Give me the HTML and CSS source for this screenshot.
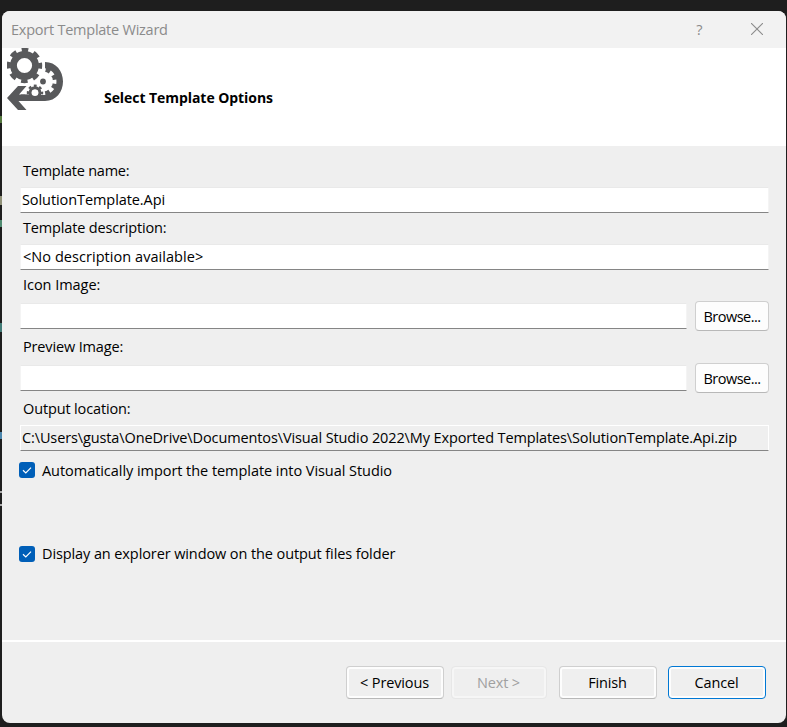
FILE: index.html
```html
<!DOCTYPE html>
<html lang="en">
<head>
<meta charset="utf-8">
<title>Export Template Wizard</title>
<link rel="stylesheet" href="styles.css">
</head>
<body>
<main class="dialog">
  <header class="titlebar">
    <span class="title">Export Template Wizard</span>
    <span class="help">?</span>
    <svg class="close" viewBox="0 0 12 12"><path d="M0 0L12 12M12 0L0 12"/></svg>
  </header>
  <section class="banner">
    <svg class="logo" viewBox="0 0 57 62">
      <defs><mask id="cut"><rect width="57" height="62" fill="#fff"/>
        <g fill="#000" stroke="#000"><circle cx="36" cy="33.500" r="10" stroke="none"/><circle cx="36" cy="33.500" r="11.200" fill="none" stroke-width="4.500" stroke-dasharray="4.400 4.396" stroke-dashoffset="2.200"/><path stroke="none" d="M18 32h18v14.500H18z"/></g></mask></defs>
      <path mask="url(#cut)" d="M38 14C49 14 56 23 56 33.500S49 53 38 53H14V46.500H30L38 38z"/>
      <path d="M19.500 38H11L0 50l11 12h8.500l-8-9H24v-6.500H12z"/>
      <circle cx="17.500" cy="17.500" r="11" class="ring" stroke-width="6.800"/>
      <circle cx="17.500" cy="17.500" r="15.700" class="ring" stroke-width="4" stroke-dasharray="6.600 5.731" stroke-dashoffset="3.300"/>
      <circle cx="36" cy="33.500" r="2.900"/>
      <circle cx="28" cy="44.800" r="4.900" class="ring" stroke-width="3.200"/>
      <circle cx="28" cy="44.800" r="7" class="ring" stroke-width="2.400" stroke-dasharray="2.800 2.698" stroke-dashoffset="1.400"/>
      <path d="M23 48.500h10V53H23z"/>
      <circle cx="28" cy="44.800" r="3.300" class="hole"/>
    </svg>
    <h1>Select Template Options</h1>
  </section>
  <section class="form">
    <label><span class="t1">Template name:</span></label>
    <div class="input"><span class="t2">SolutionTemplate.Api</span></div>
    <label><span class="t3">Template description:</span></label>
    <div class="input"><span class="t4">&lt;No description available&gt;</span></div>
    <label><span class="t5">Icon Image:</span></label>
    <div class="row"><div class="input"></div><button class="browse">Browse...</button></div>
    <label><span class="t6">Preview Image:</span></label>
    <div class="row"><div class="input"></div><button class="browse">Browse...</button></div>
    <label><span class="t7">Output location:</span></label>
    <div class="input readonly"><span class="t8">C:\Users\gusta\OneDrive\Documentos\Visual Studio 2022\My Exported Templates\SolutionTemplate.Api.zip</span></div>
    <div class="check"><svg viewBox="0 0 16 16"><rect width="16" height="16" rx="3"/><path d="M4 8.300L6.800 11 12 5.700"/></svg><span class="t9">Automatically import the template into Visual Studio</span></div>
    <div class="check second"><svg viewBox="0 0 16 16"><rect width="16" height="16" rx="3"/><path d="M4 8.300L6.800 11 12 5.700"/></svg><span class="t10">Display an explorer window on the output files folder</span></div>
  </section>
  <footer class="actions">
    <button>&lt; Previous</button>
    <button class="next" disabled>Next &gt;</button>
    <button class="finish">Finish</button>
    <button class="cancel">Cancel</button>
  </footer>
</main>
</body>
</html>
```
FILE: styles.css
```css
* { box-sizing: border-box; }
body {
  margin: 0; height: 727px; overflow: hidden; padding: 11px 1px 4px 2px;
  font: 14.5px/20px "Open Sans", "Noto Sans", sans-serif; color: #000;
  background:
    linear-gradient(#55783f, #55783f) 0 116px / 2px 7px no-repeat,
    linear-gradient(#8f9077, #8f9077) 0 196px / 2px 9px no-repeat,
    linear-gradient(#4f8a70, #4f8a70) 0 220px / 2px 7px no-repeat,
    linear-gradient(#437c78, #437c78) 0 323px / 2px 9px no-repeat,
    linear-gradient(#4b86ad, #4b86ad) 0 432px / 2px 7px no-repeat,
    linear-gradient(#aaa, #aaa) 0 491px / 2px 2px no-repeat,
    linear-gradient(#aaa, #aaa) 0 504px / 2px 2px no-repeat,
    #1e1e1e;
}
.dialog { height: 712px; border-radius: 8px; overflow: hidden; background: #efefef; display: flex; flex-direction: column; }
.titlebar { height: 37px; flex: none; display: flex; align-items: center; background: #f2f2f2; color: #8b8b8b; padding: 0 23px 0 9px; }
.title { flex: 1; letter-spacing: -.24px; }
.help { width: 9px; text-align: center; margin-right: 47px; }
.close { width: 12px; height: 12px; margin-bottom: 1px; fill: none; stroke: #8b8b8b; stroke-width: 1.1; }
.banner { height: 98px; flex: none; background: #fff; display: flex; padding-left: 5px; }
.logo { width: 57px; height: 62px; fill: #58595b; }
.ring { fill: none; stroke: #58595b; }
.hole { fill: #fff; }
h1 { margin: 40px 0 0 40px; font: bold 14px/20px "Open Sans", sans-serif; white-space: nowrap; letter-spacing: -.06px; }
.form { padding: 10px 17px 0 18px; height: 494px; flex: none; }
.form span { white-space: nowrap; }
.t1 { letter-spacing: -.23px; }
.t2 { letter-spacing: -.08px; }
.t3 { letter-spacing: -.16px; }
.t4 { letter-spacing: .05px; margin-left: 1px; }
.t5 { letter-spacing: -.04px; }
.t6 { letter-spacing: -.15px; }
.t7 { letter-spacing: -.14px; }
.t8 { letter-spacing: -.118px; }
.t9 { letter-spacing: -.05px; padding-top: 2px; }
.t10 { letter-spacing: -.1px; }
label { display: block; height: 31px; line-height: 30px; padding-left: 3px; }
.input { height: 26px; background: #fff; border: 1px solid #f4f4f4; border-top-color: #e9e9e9; border-bottom-color: #858585; padding-left: 1px; line-height: 24px; flex: 1; }
.row { display: flex; gap: 8px; height: 31px; align-items: flex-start; }
.row .input { margin-top: 2px; }
.readonly { background: #efefef; border-color: #fff #fff #858585; }
button { font: inherit; color: inherit; padding: 0; border: 1px solid #cfcfcf; border-bottom-color: #b8b8b8; border-radius: 4px; background: #fdfdfd; }
.browse { width: 74px; height: 30px; padding-top: 2px; letter-spacing: -.5px; }
.check { display: flex; align-items: center; height: 20px; margin: 9px 0 0 -1px; }
.check svg { width: 16px; height: 16px; margin-right: 7px; fill: #005fb8; }
.check path { fill: none; stroke: #fff; stroke-width: 1.2; }
.second { margin-top: 64px; }
.actions { border-top: 2px solid #fff; flex: 1; display: flex; justify-content: flex-end; padding: 24px 20px 0 0; }
.actions button { width: 98px; height: 33px; padding-right: 1px; background: #efefef; box-shadow: inset 0 0 0 2px #fdfdfd; letter-spacing: -.15px; }
.actions .next { width: 96px; margin: 0 12px 0 7px; color: #a0a0a0; border-color: #e7e7e7; box-shadow: inset 0 0 0 2px #f6f6f6; }
.actions .finish { margin-right: 11px; }
.actions .cancel { border-color: #0078d4; }
```
